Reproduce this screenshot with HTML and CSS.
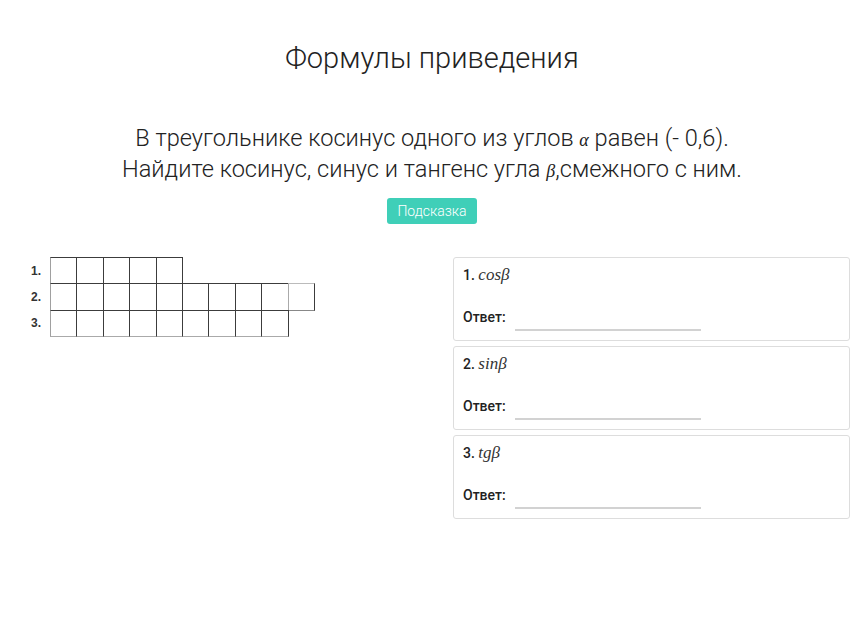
FILE: index.html
```html
<!DOCTYPE html>
<html lang="ru">
<head>
<meta charset="utf-8">
<title>Формулы приведения</title>
<link rel="stylesheet" href="styles.css">
</head>
<body>
<div class="page">
  <h1 class="title">Формулы приведения</h1>
  <p class="question">В треугольнике косинус одного из углов <span class="math">α</span> равен (- 0,6).<br>Найдите косинус, синус и тангенс угла <span class="math">β</span>,смежного с ним.</p>
  <div class="hint-wrap"><button class="hint">Подсказка</button></div>
  <div class="content">
    <div class="crossword">
      <div class="row"><span class="num">1.</span><div class="cells"><i class="c"></i><i class="c"></i><i class="c"></i><i class="c"></i><i class="c"></i></div></div>
      <div class="row"><span class="num">2.</span><div class="cells"><i class="c"></i><i class="c"></i><i class="c"></i><i class="c"></i><i class="c"></i><i class="c"></i><i class="c"></i><i class="c"></i><i class="c"></i><i class="c light"></i></div></div>
      <div class="row last"><span class="num">3.</span><div class="cells"><i class="c"></i><i class="c"></i><i class="c"></i><i class="c"></i><i class="c"></i><i class="c"></i><i class="c"></i><i class="c"></i><i class="c"></i></div></div>
    </div>
    <div class="cards">
      <div class="card">
        <div class="q"><b>1.</b> <span class="m">cosβ</span></div>
        <div class="ans"><span class="lbl">Ответ:</span><span class="line"></span></div>
      </div>
      <div class="card">
        <div class="q"><b>2.</b> <span class="m">sinβ</span></div>
        <div class="ans"><span class="lbl">Ответ:</span><span class="line"></span></div>
      </div>
      <div class="card">
        <div class="q"><b>3.</b> <span class="m">tgβ</span></div>
        <div class="ans"><span class="lbl">Ответ:</span><span class="line"></span></div>
      </div>
    </div>
  </div>
</div>
</body>
</html>
```
FILE: styles.css
```css
html, body {
  margin: 0;
  background: #fff;
}
body {
  font-family: Roboto, "Noto Sans", sans-serif;
  color: #222;
}
.page {
  width: 850px;
}
.title {
  margin: 0;
  padding-top: 40px;
  padding-left: 14px;
  text-align: center;
  font-weight: 300;
  font-size: 29px;
  line-height: 36px;
  color: #222;
}
.question {
  margin: 0;
  padding-top: 48px;
  padding-left: 14px;
  text-align: center;
  font-weight: 300;
  font-size: 23.6px;
  line-height: 29px;
  color: #222;
}
.math {
  font-family: "Liberation Serif", serif;
  font-style: italic;
  font-size: 18px;
}
.hint-wrap {
  display: flex;
  justify-content: center;
  padding-left: 14px;
  padding-top: 12px;
}
.hint {
  width: 90px;
  height: 26px;
  border: none;
  border-radius: 3px;
  background: #3fcfb8;
  color: #fff;
  font-family: Roboto, sans-serif;
  font-weight: 300;
  font-size: 14px;
  padding: 0;
}
.content {
  display: grid;
  grid-template-columns: 1fr 397px;
  padding-top: 33px;
  padding-left: 31px;
  padding-right: 0;
}
.crossword {
  display: flex;
  flex-direction: column;
}
.row {
  display: flex;
  align-items: center;
  margin-top: -1px;
}
.row:first-child { margin-top: 0; }
.num {
  width: 19px;
  font-family: "Liberation Sans", Arial, sans-serif;
  font-weight: bold;
  font-size: 12px;
  color: #333;
}
.cells {
  display: flex;
}
.c {
  display: block;
  box-sizing: border-box;
  width: 27.4px;
  height: 27.4px;
  border: 1px solid #3c3c3c;
  margin-left: -1px;
}
.c:first-child {
  margin-left: 0;
  border-left-color: #a0a0a0;
}
.c.light {
  border-top-color: #bbb;
  border-left-color: #aaa;
  border-bottom-color: #888;
}
.row.last .c {
  border-bottom-color: #aaa;
}
.cards {
  display: flex;
  flex-direction: column;
  gap: 5px;
}
.card {
  box-sizing: border-box;
  height: 84px;
  border: 1px solid #ddd;
  border-radius: 3px;
  padding: 7px 10px 0 9px;
}
.q {
  font-size: 14px;
  line-height: 20px;
  color: #222;
}
.q b {
  font-weight: 500;
}
.m {
  font-family: "Liberation Serif", serif;
  font-style: italic;
  font-size: 17px;
  color: #333;
}
.ans {
  display: flex;
  align-items: flex-end;
  margin-top: 23px;
}
.lbl {
  font-size: 14px;
  font-weight: 500;
  line-height: 18px;
  color: #222;
}
.line {
  display: block;
  width: 186px;
  height: 2px;
  background: #d2d2d2;
  margin-left: 9px;
  margin-bottom: -5px;
}
```
